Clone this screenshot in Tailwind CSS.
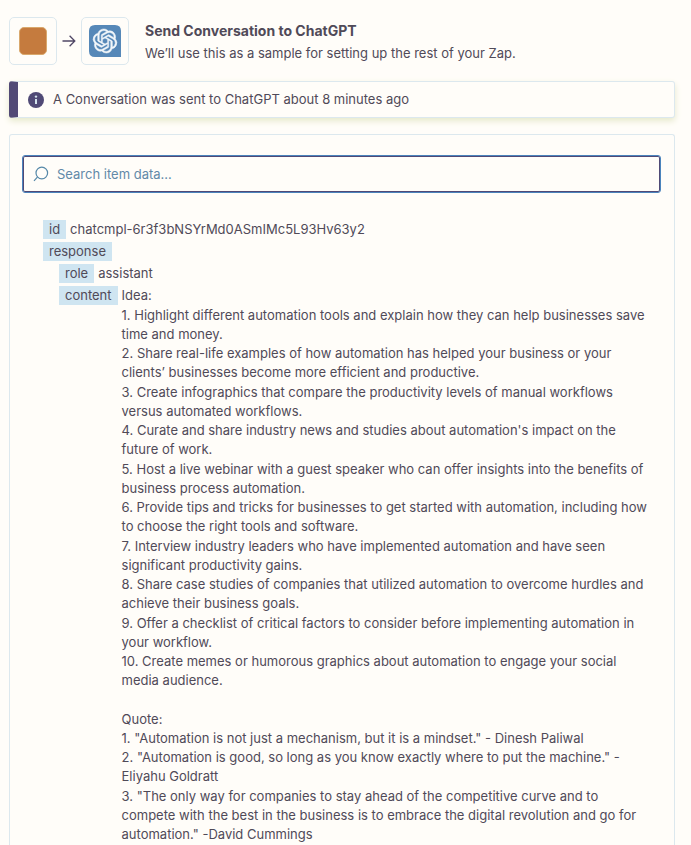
<!DOCTYPE html>
<html lang="en">
<head>
<meta charset="utf-8">
<meta name="viewport" content="width=device-width, initial-scale=1">
<title>Send Conversation to ChatGPT</title>
<script src="https://cdn.jsdelivr.net/npm/@tailwindcss/browser@4"></script>
</head>
<body class="flex min-h-screen flex-col bg-[#fffdf9] pr-4 pl-[9px] pt-[17px] font-['Inter',sans-serif] text-[13px] leading-[19px] text-[#504a58]">
  <header class="flex items-center">
    <div class="flex size-12 shrink-0 items-center justify-center rounded-[5px] border border-[#dce8ee]">
      <div class="size-7 rounded-[5px] border border-[#d9a86c] bg-[#c57b3e]"></div>
    </div>
    <svg class="mx-[5px] size-[14px] shrink-0" viewBox="0 0 14 14" fill="none" stroke="#504766" stroke-width="1.3" aria-hidden="true"><path d="M0.5 7H12.7M7.6 1.8L12.8 7L7.6 12.2"/></svg>
    <div class="flex size-12 shrink-0 items-center justify-center rounded-[5px] border border-[#dce8ee]">
      <svg class="size-8" viewBox="0 0 32 32" role="img" aria-label="ChatGPT">
        <path fill="#5688b8" d="M6 0H26Q32 0 32 6V32H6Q0 32 0 26V6Q0 0 6 0Z"/>
        <path transform="translate(4 4)" fill="#f2f7fa" stroke="#f2f7fa" stroke-width=".5" d="M22.2819 9.8211a5.9847 5.9847 0 0 0-.5157-4.9108 6.0462 6.0462 0 0 0-6.5098-2.9A6.0651 6.0651 0 0 0 4.9807 4.1818a5.9847 5.9847 0 0 0-3.9977 2.9 6.0462 6.0462 0 0 0 .7427 7.0966 5.98 5.98 0 0 0 .511 4.9107 6.051 6.051 0 0 0 6.5146 2.9001A5.9847 5.9847 0 0 0 13.2599 24a6.0557 6.0557 0 0 0 5.7718-4.2058 5.9894 5.9894 0 0 0 3.9977-2.9001 6.0557 6.0557 0 0 0-.7475-7.0729zm-9.022 12.6081a4.4755 4.4755 0 0 1-2.8764-1.0408l.1419-.0804 4.7783-2.7582a.7948.7948 0 0 0 .3927-.6813v-6.7369l2.02 1.1686a.071.071 0 0 1 .038.052v5.5826a4.504 4.504 0 0 1-4.4945 4.4944zm-9.6607-4.1254a4.4708 4.4708 0 0 1-.5346-3.0137l.142.0852 4.783 2.7582a.7712.7712 0 0 0 .7806 0l5.8428-3.3685v2.3324a.0804.0804 0 0 1-.0332.0615L9.74 19.9502a4.4992 4.4992 0 0 1-6.1408-1.6464zM2.3408 7.8956a4.485 4.485 0 0 1 2.3655-1.9728V11.6a.7664.7664 0 0 0 .3879.6765l5.8144 3.3543-2.0201 1.1685a.0757.0757 0 0 1-.071 0l-4.8303-2.7865A4.504 4.504 0 0 1 2.3408 7.872zm16.5963 3.8558L13.1038 8.364 15.1192 7.2a.0757.0757 0 0 1 .071 0l4.8303 2.7913a4.4944 4.4944 0 0 1-.6765 8.1042v-5.6772a.79.79 0 0 0-.407-.667zm2.0107-3.0231l-.142-.0852-4.7735-2.7818a.7759.7759 0 0 0-.7854 0L9.409 9.2297V6.8974a.0662.0662 0 0 1 .0284-.0615l4.8303-2.7866a4.4992 4.4992 0 0 1 6.6802 4.66zM8.3065 12.863l-2.02-1.1638a.0804.0804 0 0 1-.038-.0567V6.0742a4.4992 4.4992 0 0 1 7.3757-3.4537l-.142.0805L8.704 5.459a.7948.7948 0 0 0-.3927.6813zm1.0976-2.3654l2.602-1.4998 2.6069 1.4998v2.9994l-2.5974 1.4997-2.6067-1.4997Z"/>
      </svg>
    </div>
    <div class="ml-4 flex flex-col gap-1 pt-[2px]">
      <h1 class="text-[14px] font-bold">Send Conversation to ChatGPT</h1>
      <p>We’ll use this as a sample for setting up the rest of your Zap.</p>
    </div>
  </header>

  <div role="status" class="mt-4 flex h-[37px] items-center gap-[9px] rounded-[3px] border border-l-[9px] border-[#dce8ee] border-l-[#524a76] bg-[#fffdf9] pl-[10px] shadow-[0_3px_6px_#e6e9cc]">
    <svg class="size-4 shrink-0" viewBox="0 0 16 16" aria-hidden="true"><circle cx="8" cy="8" r="8" fill="#504a76"/><circle cx="8" cy="4.6" r="1.2" fill="#d4e4ee"/><path d="M8 7V12" stroke="#d4e4ee" stroke-width="2"/></svg>
    <p>A Conversation was sent to ChatGPT about 8 minutes ago</p>
  </div>

  <main class="mt-4 grow rounded-t-[3px] border border-b-0 border-[#dce8ee] px-3 pt-5">
    <div class="mr-px flex h-[38px] items-center gap-2 rounded-[3px] border border-[#4b84bd] px-[10px] shadow-[inset_0_0_0_1px_#504a76]">
      <svg class="size-4 shrink-0" viewBox="0 0 16 16" fill="none" stroke="#5688a8" stroke-width="1.2" aria-hidden="true"><circle cx="8.8" cy="7" r="5.8"/><path d="M4.4 11.2L1 14.8"/></svg>
      <input type="search" aria-label="Search item data" placeholder="Search item data..." class="min-w-0 grow bg-transparent outline-none placeholder:text-[#6289a8]">
    </div>

    <dl class="mt-[27px] flex flex-col gap-[3px] pr-2 pl-[21px]">
      <div class="flex gap-1"><dt class="bg-[#cfe5f1] px-[6px]">id</dt><dd>chatcmpl-6r3f3bNSYrMd0ASmIMc5L93Hv63y2</dd></div>
      <div class="flex flex-col items-start gap-[3px]">
        <dt class="bg-[#cfe5f1] px-[6px]">response</dt>
        <dd>
          <dl class="flex flex-col gap-[3px] pl-4">
            <div class="flex gap-1"><dt class="bg-[#cfe5f1] px-[6px]">role</dt><dd>assistant</dd></div>
            <div class="flex items-start gap-1">
              <dt class="bg-[#cfe5f1] px-[6px]">content</dt>
              <dd>
                <p class="mb-px">Idea:</p>
                <ul>
                  <li class="even:pb-px">1. Highlight different automation tools and explain how they can help businesses save time and money.</li>
                  <li class="even:pb-px">2. Share real-life examples of how automation has helped your business or your clients’ businesses become more efficient and productive.</li>
                  <li class="even:pb-px">3. Create infographics that compare the productivity levels of manual workflows versus automated workflows.</li>
                  <li class="even:pb-px">4. Curate and share industry news and studies about automation's impact on the future of work.</li>
                  <li class="even:pb-px">5. Host a live webinar with a guest speaker who can offer insights into the benefits of business process automation.</li>
                  <li class="even:pb-px">6. Provide tips and tricks for businesses to get started with automation, including how to choose the right tools and software.</li>
                  <li class="even:pb-px">7. Interview industry leaders who have implemented automation and have seen significant productivity gains.</li>
                  <li class="even:pb-px">8. Share case studies of companies that utilized automation to overcome hurdles and achieve their business goals.</li>
                  <li class="even:pb-px">9. Offer a checklist of critical factors to consider before implementing automation in your workflow.</li>
                  <li class="even:pb-px">10. Create memes or humorous graphics about automation to engage your social media audience.</li>
                </ul>
                <p class="mt-[19px]">Quote:</p>
                <ul>
                  <li class="even:pb-px">1. "Automation is not just a mechanism, but it is a mindset." - Dinesh Paliwal</li>
                  <li class="even:pb-px">2. "Automation is good, so long as you know exactly where to put the machine." - Eliyahu Goldratt</li>
                  <li class="even:pb-px">3. "The only way for companies to stay ahead of the competitive curve and to compete with the best in the business is to embrace the digital revolution and go for automation." -David Cummings</li>
                </ul>
              </dd>
            </div>
          </dl>
        </dd>
      </div>
    </dl>
  </main>
</body>
</html>
